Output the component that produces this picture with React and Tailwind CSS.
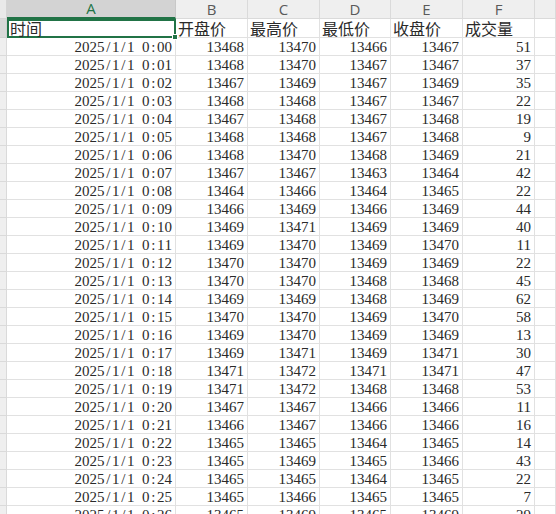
const rows = [
  ["0:00", 13468, 13470, 13466, 13467, 51],
  ["0:01", 13468, 13470, 13467, 13467, 37],
  ["0:02", 13467, 13469, 13467, 13469, 35],
  ["0:03", 13468, 13468, 13467, 13467, 22],
  ["0:04", 13467, 13468, 13467, 13468, 19],
  ["0:05", 13468, 13468, 13467, 13468, 9],
  ["0:06", 13468, 13470, 13468, 13469, 21],
  ["0:07", 13467, 13467, 13463, 13464, 42],
  ["0:08", 13464, 13466, 13464, 13465, 22],
  ["0:09", 13466, 13469, 13466, 13469, 44],
  ["0:10", 13469, 13471, 13469, 13469, 40],
  ["0:11", 13469, 13470, 13469, 13470, 11],
  ["0:12", 13470, 13470, 13469, 13469, 22],
  ["0:13", 13470, 13470, 13468, 13468, 45],
  ["0:14", 13469, 13469, 13468, 13469, 62],
  ["0:15", 13470, 13470, 13469, 13470, 58],
  ["0:16", 13469, 13470, 13469, 13469, 13],
  ["0:17", 13469, 13471, 13469, 13471, 30],
  ["0:18", 13471, 13472, 13471, 13471, 47],
  ["0:19", 13471, 13472, 13468, 13468, 53],
  ["0:20", 13467, 13467, 13466, 13466, 11],
  ["0:21", 13466, 13467, 13466, 13466, 16],
  ["0:22", 13465, 13465, 13464, 13465, 14],
  ["0:23", 13465, 13469, 13465, 13466, 43],
  ["0:24", 13465, 13465, 13464, 13465, 22],
  ["0:25", 13465, 13466, 13465, 13465, 7],
  ["0:26", 13465, 13469, 13465, 13469, 29],
];

const gridCols = "grid grid-cols-[7px_169px_72px_72px_71px_72px_72px_1fr]";
const cell = "border-r border-b border-[#e1e1e1] h-[18px] leading-[18px] px-[3px] whitespace-pre overflow-hidden";
const hcell = "border-r border-b border-[#e1e1e1] h-[19px] px-[2px] whitespace-pre flex items-center";
const serif = { fontFamily: '"Liberation Serif", "Noto Sans CJK SC", serif' };
const cjk = { fontFamily: '"Noto Sans CJK SC", sans-serif' };

function DateText({ t }) {
  const chars = ("2025/1/1 " + t).split("");
  return (
    <span className="inline-flex">
      {chars.map((c, i) => (
        <span key={i} className="inline-block w-[7.5px] text-center">{c}</span>
      ))}
    </span>
  );
}

export default function App() {
  const letters = ["A", "B", "C", "D", "E", "F", ""];
  return (
    <div className="relative w-[556px] h-[514px] overflow-hidden bg-white text-[15px] text-[#2a2a2a]" style={serif}>
      <div className={gridCols + " h-[19px]"}>
        <div className="bg-[#e9e9e9] border-r border-b border-[#d4d4d4]" />
        {letters.map((l, i) => (
          <div
            key={i}
            className={
              i === 0
                ? "bg-[#d3d3d3] border-r border-[#c8c8c8] border-b-2 border-b-[#217346] text-[#217346] flex items-center justify-center text-[15px] leading-[17px]"
                : "bg-[#efefef] border-r border-b border-[#dadada] text-[#5a5a5a] flex items-center justify-center text-[15px] leading-[17px]"
            }
            style={{ fontFamily: '"Open Sans", "Liberation Sans", sans-serif' }}
          >
            {l}
          </div>
        ))}
      </div>
      <div className={gridCols}>
        <div className="bg-[#d9d9d9] border-r border-b border-[#d0d0d0] h-[19px]" />
        <div className="relative h-[19px] px-[1px] whitespace-pre flex items-center border-2 border-[#217346]">
          <span style={cjk} className="text-[16px] leading-[15px]">时间</span>
          <div className="absolute z-20 right-[-4px] bottom-[-4px] w-[6px] h-[6px] bg-[#217346] border border-white" />
        </div>
        {["开盘价", "最高价", "最低价", "收盘价", "成交量"].map((h) => (
          <div key={h} className={hcell}>
            <span style={cjk} className="text-[16px] leading-[17px]">{h}</span>
          </div>
        ))}
        <div className={hcell} />
      </div>
      {rows.map((r) => (
        <div key={r[0]} className={gridCols}>
          <div className="bg-[#efefef] border-r border-b border-[#dadada] h-[18px]" />
          <div className={cell + " text-right"}>
            <DateText t={r[0]} />
          </div>
          {r.slice(1).map((v, i) => (
            <div key={i} className={cell + " text-right"}>{v}</div>
          ))}
          <div className={cell} />
        </div>
      ))}
    </div>
  );
}
